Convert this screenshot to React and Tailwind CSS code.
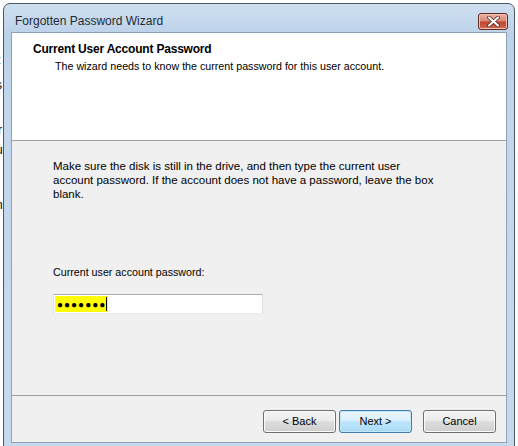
import React from "react";

const Button = ({ label, primary }) => (
  <button
    className={
      "w-[73px] h-[23px] rounded-[3px] border text-[11px] text-black flex items-center justify-center " +
      (primary
        ? "border-[#3c7fb1] bg-[linear-gradient(#eaf6fd_0%,#d9f0fc_50%,#bee6fd_50%,#a7d9f5_100%)] shadow-[inset_0_0_0_1px_#c4e5f6]"
        : "border-[#707070] bg-[linear-gradient(#f2f2f2_0%,#ebebeb_50%,#dddddd_50%,#cfcfcf_100%)] shadow-[inset_0_0_0_1px_#fbfbfb]")
    }
  >
    {label}
  </button>
);

const App = () => {
  return (
    <div
      className="relative w-[518px] h-[446px] bg-white overflow-hidden"
      style={{ fontFamily: '"Liberation Sans", Arial, sans-serif' }}
    >
      {/* bits of the app behind the dialog */}
      <div className="absolute left-[-3px] top-[54px] text-[12px] text-black leading-none">t</div>
      <div className="absolute left-[-4px] top-[79px] text-[12px] text-black leading-none">s</div>
      <div className="absolute left-[-2px] top-[124px] text-[12px] text-black leading-none">r</div>
      <div className="absolute left-[-4px] top-[144px] text-[12px] text-black leading-none">u</div>
      <div className="absolute left-[-4px] top-[199px] text-[12px] text-black leading-none">n</div>

      <div className="absolute left-[3px] top-[3px] w-[512px] h-[460px] rounded-t-[7px] border border-[#4a5868] bg-[linear-gradient(#cfdff0_0px,#bcd2e9_30px,#c3d7ec_120px,#c6daee_100%)] flex flex-col">
        {/* title bar */}
        <div className="h-[28px] flex items-center justify-between pl-[11px] pr-[6px] shrink-0">
          <span className="text-[12px] text-[#1e2a36] mt-[6px]">Forgotten Password Wizard</span>
          <div className="w-[30px] h-[17px] mt-[6px] rounded-[3px] border border-[#5e2a22] bg-[linear-gradient(#eab2a3_0%,#d98a78_45%,#c2452f_55%,#d26a4c_100%)] flex items-center justify-center shadow-[inset_0_0_0_1px_#efc2b4]">
            <svg width="13" height="11" viewBox="0 0 13 11">
              <path d="M2 1.5 L11 9.5 M11 1.5 L2 9.5" stroke="#4a1a12" strokeWidth="3.6" strokeLinecap="round" />
              <path d="M2 1.5 L11 9.5 M11 1.5 L2 9.5" stroke="#ffffff" strokeWidth="2.2" strokeLinecap="round" />
            </svg>
          </div>
        </div>

        {/* client area */}
        <div className="mx-[7px] h-[411px] border border-[#8da3bb] bg-[#f0f0f0] flex flex-col shrink-0">
          <div className="h-[108px] bg-white border-b border-[#a0a0a0] pt-[9px] shrink-0">
            <div className="pl-[21px] text-[12px] font-bold text-black leading-[14px] tracking-[-0.2px]">
              Current User Account Password
            </div>
            <div className="pl-[43px] mt-[3px] text-[10.7px] text-black leading-[14px]">
              The wizard needs to know the current password for this user account.
            </div>
          </div>

          <div className="flex-1 flex flex-col pl-[41px] pt-[18px]">
            <p className="w-[420px] text-[11.5px] leading-[14px] text-black">
              Make sure the disk is still in the drive, and then type the current user
              <br />
              account password. If the account does not have a password, leave the box
              <br />
              blank.
            </p>
            <div className="mt-[64px] text-[10.7px] leading-[14px] text-black">
              Current user account password:
            </div>
            <div className="mt-[15px] w-[210px] h-[20px] bg-white border border-[#abadb3] border-l-[#e2e3ea] border-b-[#e3e9ef] border-r-[#dbdfe6] flex items-center pl-[1px]">
              <span className="h-[16px] bg-[#ffff00] flex items-center pl-[2px] pr-[1px] text-[10px] tracking-[1px] text-black">
                ●●●●●●●
                <span className="w-[1px] h-[14px] bg-black" />
              </span>
            </div>
          </div>

          <div className="h-[47px] border-t border-[#a0a0a0] flex items-start justify-end pr-[10px] pt-[14px] shrink-0">
            <Button label="< Back" />
            <div className="w-[3px]" />
            <Button label="Next >" primary />
            <div className="w-[11px]" />
            <Button label="Cancel" />
          </div>
        </div>
      </div>
    </div>
  );
};

export default App;
